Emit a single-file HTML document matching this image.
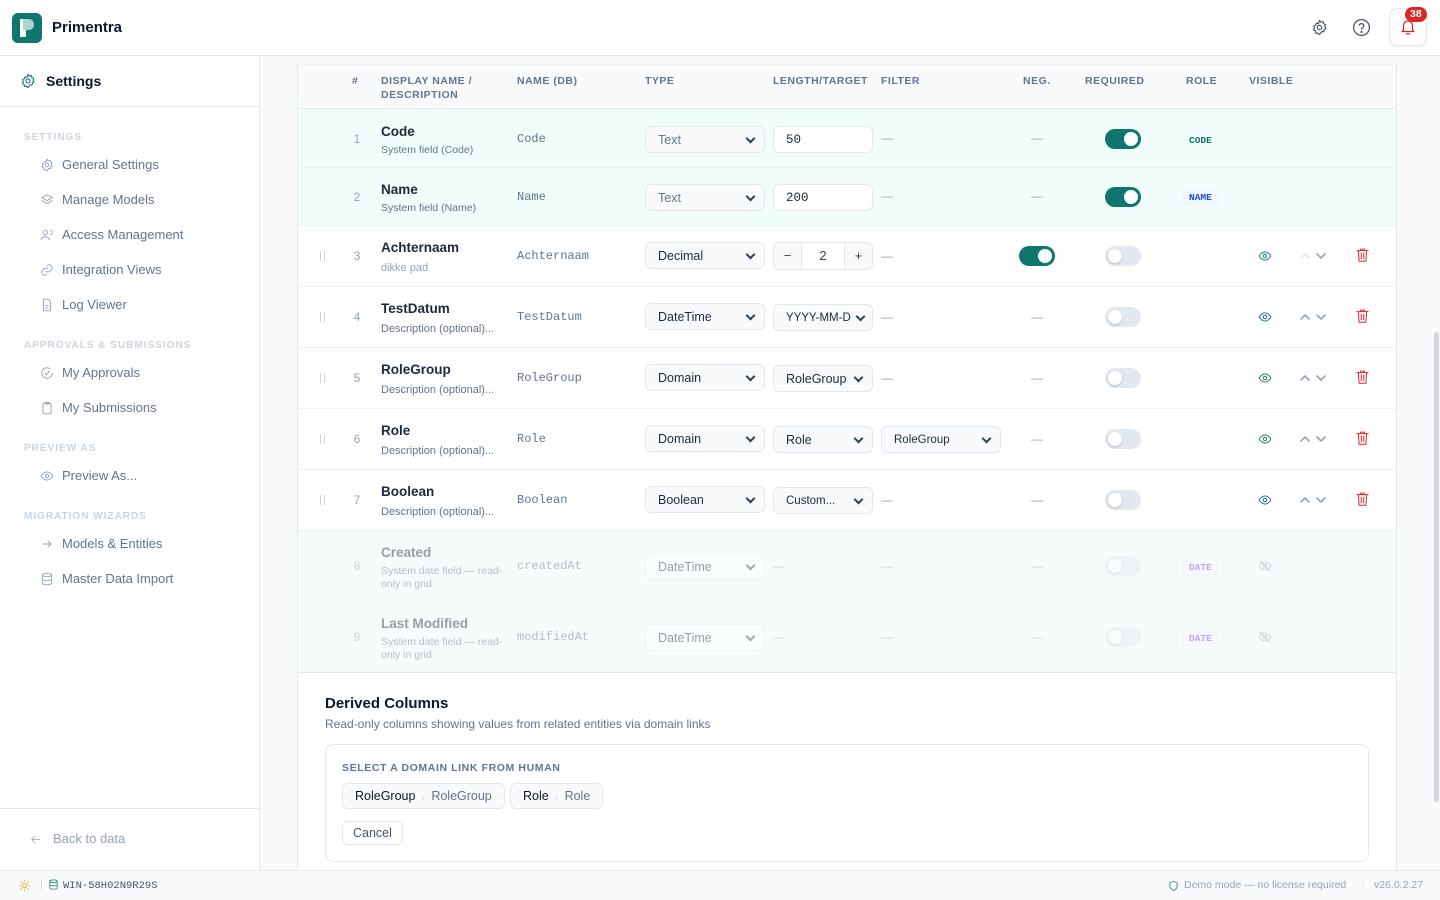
<!DOCTYPE html>
<html><head><meta charset="utf-8"><style>
*{box-sizing:border-box;margin:0;padding:0}
body{width:1440px;height:900px;overflow:hidden;background:#f8fafc;font-family:"Liberation Sans",sans-serif;color:#0f172a;position:relative}
.a{position:absolute}
.hdr{left:0;top:0;width:1440px;height:56px;background:#fff;border-bottom:1px solid #e2e8f0}
.side{left:0;top:56px;width:260px;height:814px;background:#fff;border-right:1px solid #e2e8f0}
.sec{left:24px;font-size:10px;font-weight:bold;letter-spacing:1px;color:#cbd5e1}
.item{left:40px;font-size:13px;color:#64748b;display:flex;align-items:center;gap:8px}
.item svg{width:14px;height:14px;stroke:#94a3b8;fill:none;stroke-width:1.6}
.card{left:297px;top:64px;width:1100px;height:820px;background:#fff;border:1px solid #e2e8f0;border-top:none}
.th{font-size:10.5px;font-weight:bold;color:#64748b;letter-spacing:.5px;line-height:14px}
.row{left:298px;width:1098px;border-bottom:1px solid #eef2f6}
.num{font-size:12px;color:#94a3b8;width:20px;text-align:center;left:347px}
.t{left:381px;font-size:13.5px;font-weight:bold;color:#1e293b}
.s{left:381px;font-size:10.5px;color:#64748b;line-height:13px;width:125px}
.db{left:517px;font-family:"Liberation Mono",monospace;font-size:12px;color:#64748b}
.sel{height:27px;border:1px solid #e2e8f0;border-radius:6px;background:#f8fafc;font-size:12.5px;color:#1e293b;padding:0 8px 0 12px;display:flex;align-items:center;justify-content:space-between;overflow:hidden;white-space:nowrap}
.sel:after{content:"";flex:none;width:5px;height:5px;border-right:2px solid #334155;border-bottom:2px solid #334155;transform:rotate(45deg);margin:-3px 2px 0 6px}
.sel.nc:after{display:none}
.dash{font-size:12px;color:#94a3b8}
.tg{width:36px;height:20px;border-radius:10px;background:#0f766e}
.tg:after{content:"";position:absolute;right:3px;top:3px;width:14px;height:14px;border-radius:50%;background:#fff}
.tg.off{background:#e2e8f0}
.tg.off:after{right:auto;left:3px;box-shadow:0 1px 2px rgba(0,0,0,.2)}
.badge{font-family:"Liberation Mono",monospace;font-size:9.5px;font-weight:bold;padding:3px 7px;border-radius:4px}
.drag{left:320px;width:5px;height:10px;border-left:1px solid #cbd5e1;border-right:1px solid #cbd5e1}
.ico{fill:none;stroke-width:1.6;stroke-linecap:round;stroke-linejoin:round}
.dim{opacity:.45}
</style></head><body>

<div class="a hdr"></div>
<div class="a" style="left:12px;top:13px;width:30px;height:30px;border-radius:6px;background:#0f766e"></div>
<div class="a" style="left:20px;top:19px;width:6px;height:18px;background:#fff;border-radius:1px"></div>
<div class="a" style="left:23px;top:19px;width:11px;height:11px;background:#a7d7cf;border-radius:0 5px 5px 0"></div>
<div class="a" style="left:52px;top:19px;font-size:15px;font-weight:bold;color:#0f172a">Primentra</div>
<svg class="a ico" style="left:1311px;top:19px" width="17" height="17" viewBox="0 0 24 24" stroke="#475569"><circle cx="12" cy="12" r="3"/><path d="M12 2l2 2.5 3-.8.8 3L20.5 8 19.5 11l1.5 2.5-2.5 1.5-.3 3-3-.2L12 22l-2.5-2.2-3 .2-.3-3L3.5 15.5 5 13l-1-3 2.7-1.2.8-3 3 .8z"/></svg>
<svg class="a ico" style="left:1352px;top:18px" width="19" height="19" viewBox="0 0 24 24" stroke="#475569"><circle cx="12" cy="12" r="10"/><path d="M9.1 9a3 3 0 015.8 1c0 2-3 2.5-3 4"/><circle cx="12" cy="17.5" r=".6" fill="#475569"/></svg>
<div class="a" style="left:1389px;top:8px;width:38px;height:38px;border:1px solid #e2e8f0;border-radius:8px;background:#fff;box-shadow:0 1px 2px rgba(0,0,0,.05)"></div>
<svg class="a ico" style="left:1399px;top:18px" width="18" height="18" viewBox="0 0 24 24" stroke="#dc2626"><path d="M6 16V10a6 6 0 0112 0v6l2 2H4z"/><path d="M10 21h4"/></svg>
<div class="a" style="left:1405px;top:7px;background:#dc2626;color:#fff;font-size:10.5px;font-weight:bold;border-radius:8px;padding:1px 5px;line-height:13px">38</div>

<div class="a side"></div>
<div class="a" style="left:0;top:106px;width:259px;border-top:1px solid #e2e8f0"></div>
<svg class="a ico" style="left:20px;top:73px" width="16" height="16" viewBox="0 0 24 24" stroke="#0f766e" stroke-width="2"><circle cx="12" cy="12" r="3"/><path d="M12 2l2 2.5 3-.8.8 3L20.5 8 19.5 11l1.5 2.5-2.5 1.5-.3 3-3-.2L12 22l-2.5-2.2-3 .2-.3-3L3.5 15.5 5 13l-1-3 2.7-1.2.8-3 3 .8z"/></svg>
<div class="a" style="left:46px;top:73px;font-size:14px;font-weight:bold">Settings</div>
<div class="a sec" style="top:132px">SETTINGS</div>
<div class="a item" style="top:157px"><svg viewBox="0 0 24 24"><circle cx="12" cy="12" r="3"/><path d="M12 2l2 2.5 3-.8.8 3L20.5 8 19.5 11l1.5 2.5-2.5 1.5-.3 3-3-.2L12 22l-2.5-2.2-3 .2-.3-3L3.5 15.5 5 13l-1-3 2.7-1.2.8-3 3 .8z"/></svg>General Settings</div>
<div class="a item" style="top:192px"><svg viewBox="0 0 24 24"><path d="M12 3l9 5-9 5-9-5z"/><path d="M3 13l9 5 9-5"/></svg>Manage Models</div>
<div class="a item" style="top:227px"><svg viewBox="0 0 24 24"><circle cx="9" cy="8" r="4"/><path d="M2 21c0-4 3-6 7-6s7 2 7 6"/><path d="M17 4a4 4 0 010 8"/></svg>Access Management</div>
<div class="a item" style="top:262px"><svg viewBox="0 0 24 24"><path d="M10 14a5 5 0 007 0l3-3a5 5 0 00-7-7l-1 1"/><path d="M14 10a5 5 0 00-7 0l-3 3a5 5 0 007 7l1-1"/></svg>Integration Views</div>
<div class="a item" style="top:297px"><svg viewBox="0 0 24 24"><path d="M14 2H6v20h12V6z"/><path d="M9 13h6M9 17h6"/></svg>Log Viewer</div>
<div class="a sec" style="top:340px">APPROVALS &amp; SUBMISSIONS</div>
<div class="a item" style="top:365px"><svg viewBox="0 0 24 24"><path d="M21 12a9 9 0 11-4-7.5"/><path d="M8 12l3 3 6-7"/></svg>My Approvals</div>
<div class="a item" style="top:400px"><svg viewBox="0 0 24 24"><rect x="5" y="4" width="14" height="18" rx="2"/><path d="M9 2h6v3H9z"/></svg>My Submissions</div>
<div class="a sec" style="top:443px">PREVIEW AS</div>
<div class="a item" style="top:468px"><svg viewBox="0 0 24 24"><path d="M2 12s4-7 10-7 10 7 10 7-4 7-10 7S2 12 2 12z"/><circle cx="12" cy="12" r="3"/></svg>Preview As...</div>
<div class="a sec" style="top:511px">MIGRATION WIZARDS</div>
<div class="a item" style="top:536px"><svg viewBox="0 0 24 24"><path d="M5 12h14M13 6l6 6-6 6"/></svg>Models &amp; Entities</div>
<div class="a item" style="top:571px"><svg viewBox="0 0 24 24"><ellipse cx="12" cy="5" rx="8" ry="3"/><path d="M4 5v14c0 1.7 3.6 3 8 3s8-1.3 8-3V5M4 12c0 1.7 3.6 3 8 3s8-1.3 8-3"/></svg>Master Data Import</div>
<div class="a" style="left:0;top:808px;width:259px;border-top:1px solid #e2e8f0"></div>
<svg class="a ico" style="left:29px;top:833px" width="13" height="13" viewBox="0 0 24 24" stroke="#94a3b8" stroke-width="2"><path d="M20 12H5M11 6l-6 6 6 6"/></svg>
<div class="a" style="left:53px;top:831px;font-size:13px;color:#94a3b8">Back to data</div>

<div class="a card"></div>
<div class="a" style="left:298px;top:64px;width:1098px;height:45px;background:#f8fafc;border-bottom:1px solid #e2e8f0;border-top:1px solid #eef2f6"></div>
<div class="a th" style="left:352px;top:74px">#</div>
<div class="a th" style="left:381px;top:74px">DISPLAY NAME /<br>DESCRIPTION</div>
<div class="a th" style="left:517px;top:74px">NAME (DB)</div>
<div class="a th" style="left:645px;top:74px">TYPE</div>
<div class="a th" style="left:773px;top:74px">LENGTH/TARGET</div>
<div class="a th" style="left:881px;top:74px">FILTER</div>
<div class="a th" style="left:1023px;top:74px">NEG.</div>
<div class="a th" style="left:1085px;top:74px">REQUIRED</div>
<div class="a th" style="left:1186px;top:74px">ROLE</div>
<div class="a th" style="left:1249px;top:74px">VISIBLE</div>

<!-- row 1 -->
<div class="a row" style="top:110px;height:58px;background:#f0fdfa"></div>
<div class="a num" style="top:132px">1</div>
<div class="a t" style="top:124px">Code</div><div class="a s" style="top:144px">System field (Code)</div>
<div class="a db" style="top:132px">Code</div>
<div class="a sel" style="left:645px;top:126px;width:120px;color:#64748b">Text</div>
<div class="a sel nc" style="left:773px;top:126px;width:100px;font-family:'Liberation Mono',monospace;background:#fff">50</div>
<div class="a dash" style="left:881px;top:131px">—</div>
<div class="a dash" style="left:1031px;top:131px">—</div>
<div class="a tg" style="left:1105px;top:129px"></div>
<div class="a badge" style="left:1182px;top:132px;color:#0f766e">CODE</div>
<!-- row 2 -->
<div class="a row" style="top:168px;height:58px;background:#f0fdfa"></div>
<div class="a num" style="top:190px">2</div>
<div class="a t" style="top:182px">Name</div><div class="a s" style="top:202px">System field (Name)</div>
<div class="a db" style="top:190px">Name</div>
<div class="a sel" style="left:645px;top:184px;width:120px;color:#64748b">Text</div>
<div class="a sel nc" style="left:773px;top:184px;width:100px;font-family:'Liberation Mono',monospace;background:#fff">200</div>
<div class="a dash" style="left:881px;top:189px">—</div>
<div class="a dash" style="left:1031px;top:189px">—</div>
<div class="a tg" style="left:1105px;top:187px"></div>
<div class="a badge" style="left:1182px;top:189px;color:#1d4ed8;background:#eff6ff">NAME</div>

<!-- row 3 -->
<div class="a row" style="top:226px;height:61px"></div>
<div class="a drag" style="top:251px"></div>
<div class="a num" style="top:249px">3</div>
<div class="a t" style="top:240px">Achternaam</div><div class="a s" style="top:262px;color:#94a3b8;font-size:11px">dikke pad</div>
<div class="a db" style="top:249px">Achternaam</div>
<div class="a sel" style="left:645px;top:242px;width:120px">Decimal</div>
<div class="a" style="left:773px;top:242px;width:100px;height:28px;border:1px solid #e2e8f0;border-radius:6px;background:#f8fafc;display:flex;font-size:13px;color:#334155;text-align:center;line-height:26px"><span style="width:28px;border-right:1px solid #e2e8f0">−</span><span style="flex:1;background:#fff">2</span><span style="width:28px;border-left:1px solid #e2e8f0">+</span></div>
<div class="a dash" style="left:881px;top:249px">—</div>
<div class="a tg" style="left:1019px;top:246px"></div>
<div class="a tg off" style="left:1105px;top:246px"></div>

<!-- rows 4-7 -->
<div class="a row" style="top:287px;height:61px"></div>
<div class="a row" style="top:348px;height:61px"></div>
<div class="a row" style="top:409px;height:61px"></div>
<div class="a row" style="top:470px;height:61px"></div>

<div class="a drag" style="top:312px"></div><div class="a num" style="top:310px">4</div>
<div class="a t" style="top:301px">TestDatum</div><div class="a s" style="top:323px;font-size:11px">Description (optional)...</div>
<div class="a db" style="top:310px">TestDatum</div>
<div class="a sel" style="left:645px;top:303px;width:120px">DateTime</div>
<div class="a sel" style="left:773px;top:304px;width:100px;font-size:11.5px">YYYY-MM-D</div>
<div class="a dash" style="left:881px;top:310px">—</div><div class="a dash" style="left:1031px;top:310px">—</div>
<div class="a tg off" style="left:1105px;top:307px"></div>

<div class="a drag" style="top:373px"></div><div class="a num" style="top:371px">5</div>
<div class="a t" style="top:362px">RoleGroup</div><div class="a s" style="top:384px;font-size:11px">Description (optional)...</div>
<div class="a db" style="top:371px">RoleGroup</div>
<div class="a sel" style="left:645px;top:364px;width:120px">Domain</div>
<div class="a sel" style="left:773px;top:365px;width:100px">RoleGroup</div>
<div class="a dash" style="left:881px;top:371px">—</div><div class="a dash" style="left:1031px;top:371px">—</div>
<div class="a tg off" style="left:1105px;top:368px"></div>

<div class="a drag" style="top:434px"></div><div class="a num" style="top:432px">6</div>
<div class="a t" style="top:423px">Role</div><div class="a s" style="top:445px;font-size:11px">Description (optional)...</div>
<div class="a db" style="top:432px">Role</div>
<div class="a sel" style="left:645px;top:425px;width:120px">Domain</div>
<div class="a sel" style="left:773px;top:426px;width:100px">Role</div>
<div class="a sel" style="left:881px;top:426px;width:120px;font-size:11.5px">RoleGroup</div>
<div class="a dash" style="left:1031px;top:432px">—</div>
<div class="a tg off" style="left:1105px;top:429px"></div>

<div class="a drag" style="top:495px"></div><div class="a num" style="top:493px">7</div>
<div class="a t" style="top:484px">Boolean</div><div class="a s" style="top:506px;font-size:11px">Description (optional)...</div>
<div class="a db" style="top:493px">Boolean</div>
<div class="a sel" style="left:645px;top:486px;width:120px">Boolean</div>
<div class="a sel" style="left:773px;top:487px;width:100px;font-size:11.5px">Custom...</div>
<div class="a dash" style="left:881px;top:493px">—</div><div class="a dash" style="left:1031px;top:493px">—</div>
<div class="a tg off" style="left:1105px;top:490px"></div>

<svg width="0" height="0" style="position:absolute"><defs>
<g id="eye"><path d="M2 12s4-7 10-7 10 7 10 7-4 7-10 7S2 12 2 12z"/><circle cx="12" cy="12" r="3"/></g>
<g id="tr"><path d="M3 5h18M9 5V2.5h6V5M5.5 5l1 17h11l1-17M10 9v9M14 9v9"/></g>
<g id="ud"><path d="M2 9l4-4 4 4"/></g>
</defs></svg>
<svg class="a ico" style="left:1258px;top:249px" width="14" height="14" viewBox="0 0 24 24" stroke="#0f766e" stroke-width="2.2"><use href="#eye"/></svg>
<svg class="a ico" style="left:1258px;top:310px" width="14" height="14" viewBox="0 0 24 24" stroke="#0f766e" stroke-width="2.2"><use href="#eye"/></svg>
<svg class="a ico" style="left:1258px;top:371px" width="14" height="14" viewBox="0 0 24 24" stroke="#0f766e" stroke-width="2.2"><use href="#eye"/></svg>
<svg class="a ico" style="left:1258px;top:432px" width="14" height="14" viewBox="0 0 24 24" stroke="#0f766e" stroke-width="2.2"><use href="#eye"/></svg>
<svg class="a ico" style="left:1258px;top:493px" width="14" height="14" viewBox="0 0 24 24" stroke="#0f766e" stroke-width="2.2"><use href="#eye"/></svg>

<svg class="a ico" style="left:1300px;top:252px" width="28" height="8" viewBox="0 0 28 8" stroke-width="1.4"><path d="M1 6l4-4 4 4" stroke="#e2e8f0"/><path d="M17 2l4 4 4-4" stroke="#94a3b8"/></svg>
<svg class="a ico" style="left:1300px;top:313px" width="28" height="8" viewBox="0 0 28 8" stroke-width="1.4" stroke="#94a3b8"><path d="M1 6l4-4 4 4"/><path d="M17 2l4 4 4-4"/></svg>
<svg class="a ico" style="left:1300px;top:374px" width="28" height="8" viewBox="0 0 28 8" stroke-width="1.4" stroke="#94a3b8"><path d="M1 6l4-4 4 4"/><path d="M17 2l4 4 4-4"/></svg>
<svg class="a ico" style="left:1300px;top:435px" width="28" height="8" viewBox="0 0 28 8" stroke-width="1.4" stroke="#94a3b8"><path d="M1 6l4-4 4 4"/><path d="M17 2l4 4 4-4"/></svg>
<svg class="a ico" style="left:1300px;top:496px" width="28" height="8" viewBox="0 0 28 8" stroke-width="1.4" stroke="#94a3b8"><path d="M1 6l4-4 4 4"/><path d="M17 2l4 4 4-4"/></svg>

<svg class="a ico" style="left:1355px;top:247px" width="15" height="16" viewBox="0 0 24 24" stroke="#dc2626" stroke-width="2.2"><use href="#tr"/></svg>
<svg class="a ico" style="left:1355px;top:308px" width="15" height="16" viewBox="0 0 24 24" stroke="#dc2626" stroke-width="2.2"><use href="#tr"/></svg>
<svg class="a ico" style="left:1355px;top:369px" width="15" height="16" viewBox="0 0 24 24" stroke="#dc2626" stroke-width="2.2"><use href="#tr"/></svg>
<svg class="a ico" style="left:1355px;top:430px" width="15" height="16" viewBox="0 0 24 24" stroke="#dc2626" stroke-width="2.2"><use href="#tr"/></svg>
<svg class="a ico" style="left:1355px;top:491px" width="15" height="16" viewBox="0 0 24 24" stroke="#dc2626" stroke-width="2.2"><use href="#tr"/></svg>

<!-- rows 8-9 -->
<div class="a" style="left:298px;top:531px;width:1098px;height:142px;background:#f6fbfb;border-bottom:1px solid #e2e8f0"></div>
<div class="dim">
<div class="a num" style="top:559px">8</div>
<div class="a t" style="top:545px">Created</div><div class="a s" style="top:565px">System date field — read-only in grid</div>
<div class="a db" style="top:559px">createdAt</div>
<div class="a sel" style="left:645px;top:553px;width:120px;background:#fff">DateTime</div>
<div class="a dash" style="left:773px;top:559px">—</div><div class="a dash" style="left:881px;top:559px">—</div><div class="a dash" style="left:1031px;top:559px">—</div>
<div class="a tg off" style="left:1105px;top:556px"></div>
<div class="a badge" style="left:1182px;top:559px;color:#7c3aed;background:#f5f3ff">DATE</div>
<svg class="a ico" style="left:1258px;top:559px" width="14" height="14" viewBox="0 0 24 24" stroke="#94a3b8" stroke-width="2"><use href="#eye"/><path d="M3 3l18 18"/></svg>
<div class="a num" style="top:630px">9</div>
<div class="a t" style="top:616px">Last Modified</div><div class="a s" style="top:636px">System date field — read-only in grid</div>
<div class="a db" style="top:630px">modifiedAt</div>
<div class="a sel" style="left:645px;top:624px;width:120px;background:#fff">DateTime</div>
<div class="a dash" style="left:773px;top:630px">—</div><div class="a dash" style="left:881px;top:630px">—</div><div class="a dash" style="left:1031px;top:630px">—</div>
<div class="a tg off" style="left:1105px;top:627px"></div>
<div class="a badge" style="left:1182px;top:630px;color:#7c3aed;background:#f5f3ff">DATE</div>
<svg class="a ico" style="left:1258px;top:630px" width="14" height="14" viewBox="0 0 24 24" stroke="#94a3b8" stroke-width="2"><use href="#eye"/><path d="M3 3l18 18"/></svg>
</div>

<!-- derived -->
<div class="a" style="left:325px;top:695px;font-size:15px;font-weight:bold;color:#0f172a">Derived Columns</div>
<div class="a" style="left:325px;top:717px;font-size:12px;color:#64748b">Read-only columns showing values from related entities via domain links</div>
<div class="a" style="left:325px;top:744px;width:1044px;height:118px;border:1px solid #e2e8f0;border-radius:8px;background:#fff"></div>
<div class="a" style="left:342px;top:762px;font-size:10.5px;font-weight:bold;color:#64748b;letter-spacing:.6px">SELECT A DOMAIN LINK FROM HUMAN</div>
<div class="a" style="left:342px;top:783px;height:26px;padding:0 12px;border:1px solid #e2e8f0;border-radius:6px;background:#f8fafc;font-size:12.5px;line-height:24px;color:#0f172a">RoleGroup <span style="color:#cbd5e1;font-size:10px">&nbsp;›&nbsp;</span> <span style="color:#64748b">RoleGroup</span></div>
<div class="a" style="left:510px;top:783px;height:26px;padding:0 12px;border:1px solid #e2e8f0;border-radius:6px;background:#f8fafc;font-size:12.5px;line-height:24px;color:#0f172a">Role <span style="color:#cbd5e1;font-size:10px">&nbsp;›&nbsp;</span> <span style="color:#64748b">Role</span></div>
<div class="a" style="left:342px;top:821px;height:24px;padding:0 10px;border:1px solid #e2e8f0;border-radius:6px;background:#fff;font-size:12.5px;line-height:22px;color:#475569">Cancel</div>

<!-- scrollbar -->
<div class="a" style="left:1434px;top:332px;width:5px;height:470px;background:#d4d8dd;border-radius:3px"></div>

<!-- footer -->
<div class="a" style="left:0;top:870px;width:1440px;height:30px;background:#f8fafc;border-top:1px solid #e2e8f0"></div>
<svg class="a ico" style="left:18px;top:879px" width="13" height="13" viewBox="0 0 24 24" stroke="#f59e0b" stroke-width="2"><circle cx="12" cy="12" r="4"/><path d="M12 2v2M12 20v2M2 12h2M20 12h2M4.9 4.9l1.4 1.4M17.7 17.7l1.4 1.4M4.9 19.1l1.4-1.4M17.7 6.3l1.4-1.4"/></svg>
<div class="a" style="left:40px;top:878px;font-size:11px;color:#cbd5e1">|</div>
<svg class="a ico" style="left:48px;top:879px" width="11" height="11" viewBox="0 0 24 24" stroke="#0f766e" stroke-width="2.5"><ellipse cx="12" cy="5" rx="8" ry="3"/><path d="M4 5v14c0 1.7 3.6 3 8 3s8-1.3 8-3V5M4 12c0 1.7 3.6 3 8 3s8-1.3 8-3"/></svg>
<div class="a" style="left:63px;top:880px;font-family:'Liberation Mono',monospace;font-size:10.5px;color:#475569">WIN-58H02N9R29S</div>
<svg class="a ico" style="left:1168px;top:880px" width="11" height="12" viewBox="0 0 24 24" stroke="#0f766e" stroke-width="2.2"><path d="M12 2l8 3v6c0 5-3.5 9-8 11-4.5-2-8-6-8-11V5z"/></svg>
<div class="a" style="left:1184px;top:879px;font-size:10.5px;color:#94a3b8">Demo mode — no license required</div>
<div class="a" style="left:1361px;top:879px;font-size:10.5px;color:#e2e8f0">|</div>
<div class="a" style="left:1374px;top:879px;font-size:10.5px;color:#94a3b8">v26.0.2.27</div>
</body></html>
